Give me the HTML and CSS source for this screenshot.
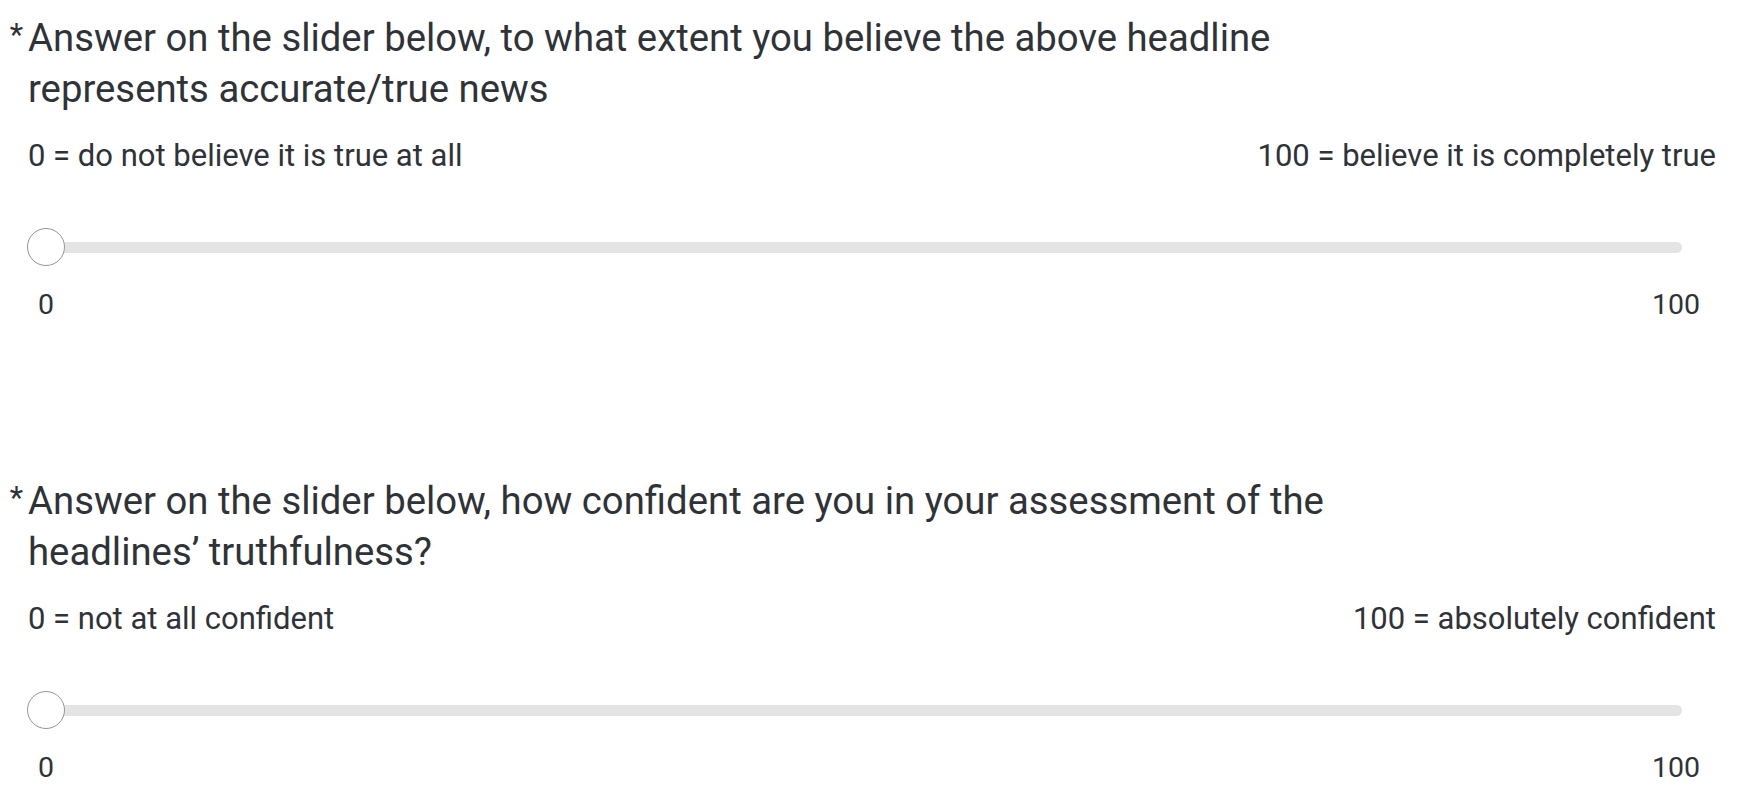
FILE: index.html
```html
<!DOCTYPE html>
<html lang="en">
<head>
<meta charset="utf-8">
<title>Survey sliders</title>
<link rel="stylesheet" href="styles.css">
</head>
<body>
<main class="survey">
  <section class="question">
    <h2 class="q-title"><span class="req">*</span><span class="q-text">Answer on the slider below, to what extent you believe the above headline represents accurate/true news</span></h2>
    <div class="anchors"><span>0 = do not believe it is true at all</span><span>100 = believe it is completely true</span></div>
    <div class="slider">
      <div class="track"></div>
      <div class="thumb"></div>
    </div>
    <div class="ticks"><span>0</span><span>100</span></div>
  </section>
  <section class="question">
    <h2 class="q-title"><span class="req">*</span><span class="q-text">Answer on the slider below, how confident are you in your assessment of the headlines’ truthfulness?</span></h2>
    <div class="anchors"><span>0 = not at all confident</span><span>100 = absolutely confident</span></div>
    <div class="slider">
      <div class="track"></div>
      <div class="thumb"></div>
    </div>
    <div class="ticks"><span>0</span><span>100</span></div>
  </section>
</main>
</body>
</html>
```

FILE: styles.css
```css
html, body {
  margin: 0;
  padding: 0;
  background: #ffffff;
}

body {
  font-family: Roboto, "Liberation Sans", sans-serif;
  color: #2f3337;
}

.survey {
  display: flex;
  flex-direction: column;
}

.question {
  padding: 12px 0 142px 0;
}

.question:last-child {
  padding-bottom: 0;
}

.q-title {
  display: flex;
  margin: 0;
  font-weight: 400;
  font-size: 38.3px;
  line-height: 51px;
}

.req {
  flex: none;
  width: 28px;
  box-sizing: border-box;
  padding-right: 5px;
  text-align: right;
  font-size: 31px;
  line-height: 45px;
}

.q-text {
  max-width: 1360px;
}

.anchors {
  display: flex;
  justify-content: space-between;
  margin: 24px 30px 0 28px;
  font-size: 31px;
  line-height: 36px;
}

.slider {
  position: relative;
  height: 38px;
  margin: 54px 64px 0 27px;
}

.track {
  position: absolute;
  left: 19px;
  right: 0;
  top: 14px;
  height: 11px;
  background: #e4e4e4;
  border-radius: 6px;
}

.thumb {
  position: absolute;
  left: 0;
  top: 0;
  width: 38px;
  height: 38px;
  box-sizing: border-box;
  border: 1px solid #92979d;
  border-radius: 50%;
  background: #ffffff;
}

.ticks {
  display: flex;
  justify-content: space-between;
  margin: 22px 46px 0 38px;
  font-size: 28.5px;
  line-height: 33px;
}
```
